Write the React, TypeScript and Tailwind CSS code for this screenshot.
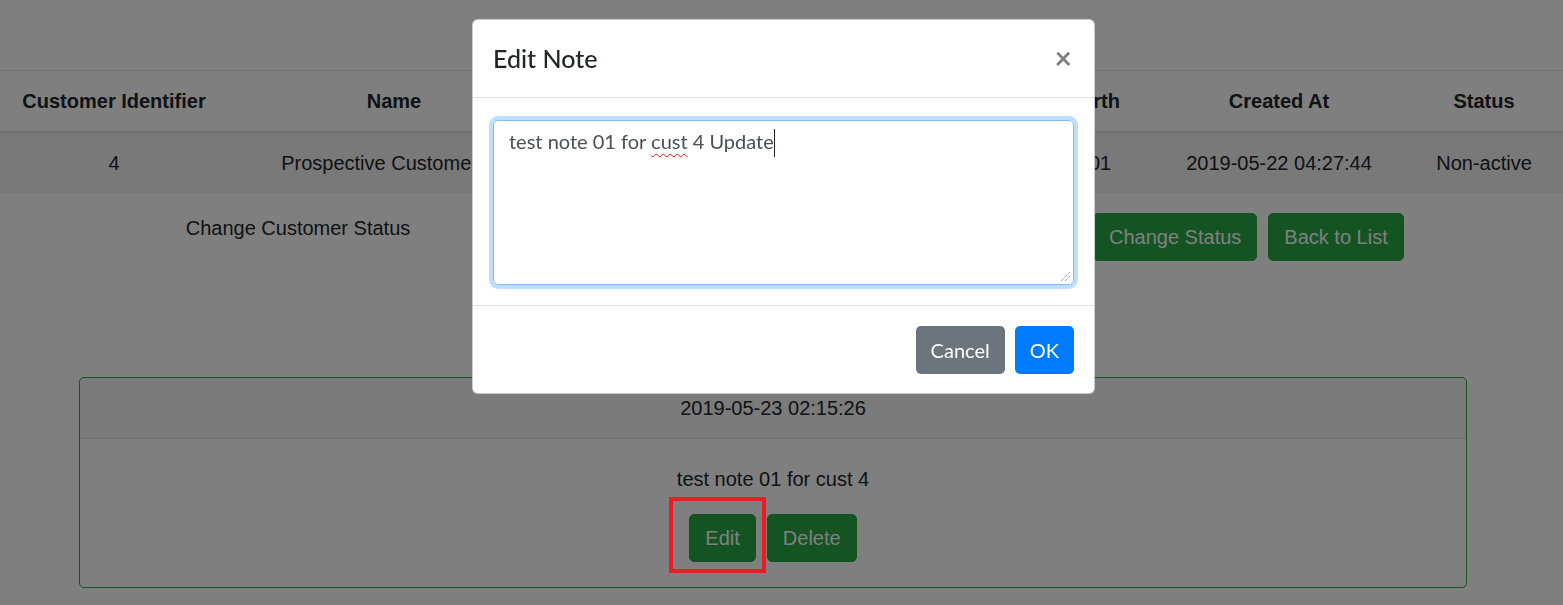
import React from "react";

// Customer detail page with the "Edit Note" modal open over it.
// Sizes follow Bootstrap 4 at 125% scale (1rem = 20px).

const COLS = [228, 332, 230, 177, 186, 252, 158];
const HEADERS = ["Customer Identifier", "Name", "Email", "Phone Number", "Date of Birth", "Created At", "Status"];
const ROW = ["4", "Prospective Customer A1", "prospect4@test.com", "0412345678", "1990-01-01", "2019-05-22 04:27:44", "Non-active"];

function GreenButton({ children }: { children: React.ReactNode }) {
  return (
    <button className="bg-[#28a745] text-white text-[20px] leading-[30px] px-[15px] py-[8px] rounded-[5px] border border-[#28a745]">
      {children}
    </button>
  );
}

function EditNoteModal() {
  return (
    <div className="fixed left-[472px] top-[19px] w-[623px] z-20 bg-white rounded-[6px] border border-black/20 font-['Lato','Open_Sans',sans-serif] text-[#212529]">
      {/* header */}
      <div className="flex items-start justify-between px-[20px] pt-[19px] pb-[20px] border-b border-[#dee2e6]">
        <h5 className="text-[25px] leading-[38px] font-medium">Edit Note</h5>
        <button className="text-[30px] leading-[30px] font-bold text-black opacity-50 mt-[3px] mr-[2px]">×</button>
      </div>

      {/* body */}
      <div className="px-[20px] pt-[22px] pb-[20px]">
        <div className="relative h-[165px] border border-[#80bdff] rounded-[5px] shadow-[0_0_0_4px_rgba(0,123,255,0.25)] px-[15px] pt-[5px] text-[20px] leading-[30px] text-[#495057]">
          test note 01 for{" "}
          <span className="underline decoration-wavy decoration-[#e81818] decoration-1 underline-offset-[4px]">cust</span>
          {" "}4 Update
          <span className="inline-block w-px h-[28px] bg-[#222] align-middle -mt-[2px]" />
          {/* resize grip */}
          <svg className="absolute right-[2px] bottom-[2px]" width="12" height="12" viewBox="0 0 12 12">
            <path d="M11 2 L2 11 M11 6 L6 11" stroke="#777" strokeWidth="1" strokeDasharray="1 1" fill="none" />
          </svg>
        </div>
      </div>

      {/* footer */}
      <div className="flex justify-end gap-[10px] px-[20px] pt-[20px] pb-[19px] border-t border-[#dee2e6]">
        <button className="bg-[#6c757d] text-white text-[20px] leading-[30px] px-[15px] py-[9px] rounded-[5px]">Cancel</button>
        <button className="bg-[#007bff] text-white text-[20px] leading-[30px] px-[15px] py-[9px] rounded-[5px]">OK</button>
      </div>
    </div>
  );
}

export default function App() {
  return (
    <div className="relative min-h-screen h-[605px] overflow-hidden bg-white font-['Liberation_Sans',Arial,sans-serif] text-[20px] text-[#212529]">
      <div className="pt-[70px]">
        <table className="w-full table-fixed border-collapse text-center">
          <colgroup>
            {COLS.map((w, i) => (
              <col key={i} style={{ width: w }} />
            ))}
          </colgroup>
          <thead>
            <tr>
              {HEADERS.map((h) => (
                <th key={h} className="font-bold px-[15px] py-[15px] leading-[30px] border-t border-b-2 border-[#dee2e6] whitespace-nowrap">
                  {h}
                </th>
              ))}
            </tr>
          </thead>
          <tbody>
            <tr className="bg-black/5">
              {ROW.map((v, i) => (
                <td key={i} className="px-[15px] py-[15px] leading-[30px] whitespace-nowrap">
                  {v}
                </td>
              ))}
            </tr>
          </tbody>
        </table>

        {/* status row */}
        <div className="flex items-start mt-[20px]">
          <div className="w-[596px] text-center leading-[30px]">Change Customer Status</div>
          <div className="w-[486px] px-[20px]">
            <select className="w-full h-[48px] border border-[#ced4da] rounded-[5px] px-[15px] text-[20px]">
              <option>Active</option>
            </select>
          </div>
          <div className="flex gap-[11px] pl-[11px]">
            <GreenButton>Change Status</GreenButton>
            <GreenButton>Back to List</GreenButton>
          </div>
        </div>

        {/* note card */}
        <div className="ml-[79px] w-[1388px] mt-[116px] border border-[#28a745] rounded-[5px] text-center">
          <div className="px-[25px] py-[15px] leading-[30px] bg-black/[0.03] border-b border-black/[0.125]">
            2019-05-23 02:15:26
          </div>
          <div className="p-[25px]">
            <p className="leading-[30px] mb-[20px]">test note 01 for cust 4</p>
            <div className="flex justify-center gap-[11px]">
              <GreenButton>Edit</GreenButton>
              <GreenButton>Delete</GreenButton>
            </div>
          </div>
        </div>
      </div>

      {/* modal backdrop */}
      <div className="fixed inset-0 z-10 bg-black/50" />
      <EditNoteModal />

      {/* screenshot annotation around the Edit button */}
      <div className="absolute left-[669px] top-[497px] w-[97px] h-[76px] border-4 border-[#ed1c24] z-30" />
    </div>
  );
}
